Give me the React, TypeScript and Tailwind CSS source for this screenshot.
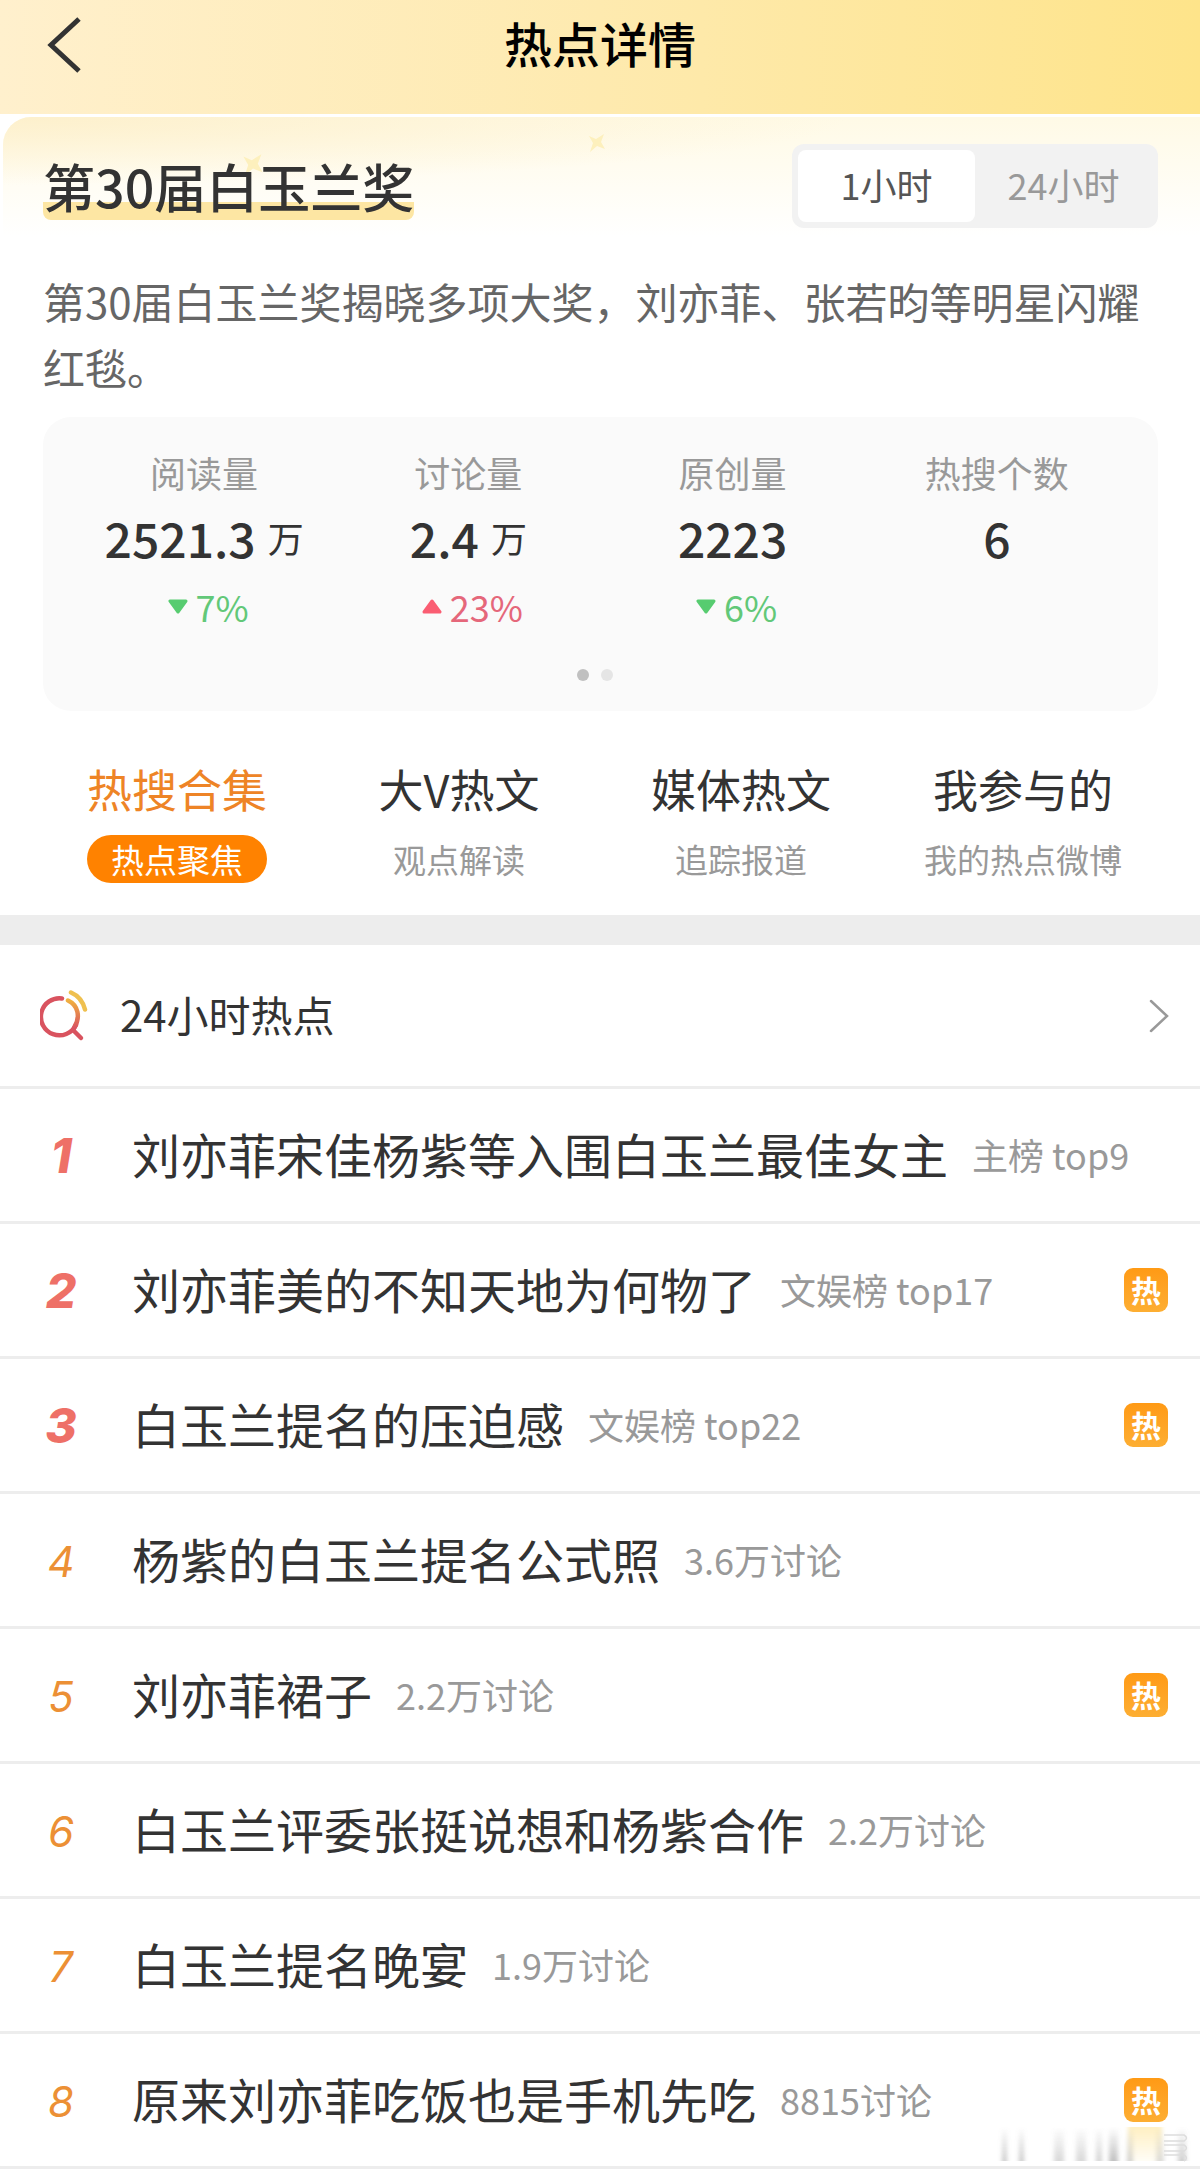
import { useState } from "react";

type Stat = { label: string; value: string; unit?: string; trend?: "up" | "down"; change?: string };
type Topic = { title: string; meta: string; hot?: boolean };

const stats: Stat[] = [
  { label: "阅读量", value: "2521.3", unit: "万", trend: "down", change: "7%" },
  { label: "讨论量", value: "2.4", unit: "万", trend: "up", change: "23%" },
  { label: "原创量", value: "2223", trend: "down", change: "6%" },
  { label: "热搜个数", value: "6" },
];

const tabs = [
  { name: "热搜合集", sub: "热点聚焦" },
  { name: "大V热文", sub: "观点解读" },
  { name: "媒体热文", sub: "追踪报道" },
  { name: "我参与的", sub: "我的热点微博" },
];

const topics: Topic[] = [
  { title: "刘亦菲宋佳杨紫等入围白玉兰最佳女主", meta: "主榜 top9" },
  { title: "刘亦菲美的不知天地为何物了", meta: "文娱榜 top17", hot: true },
  { title: "白玉兰提名的压迫感", meta: "文娱榜 top22", hot: true },
  { title: "杨紫的白玉兰提名公式照", meta: "3.6万讨论" },
  { title: "刘亦菲裙子", meta: "2.2万讨论", hot: true },
  { title: "白玉兰评委张挺说想和杨紫合作", meta: "2.2万讨论" },
  { title: "白玉兰提名晚宴", meta: "1.9万讨论" },
  { title: "原来刘亦菲吃饭也是手机先吃", meta: "8815讨论", hot: true },
];

// faint vertical streaks in the bottom right corner: x, width, opacity
const streaks = [
  [12, 5, 0.22],
  [29, 5, 0.22],
  [64, 10, 0.16],
  [86, 10, 0.16],
  [106, 6, 0.18],
  [119, 9, 0.26],
  [137, 6, 0.18],
  [166, 8, 0.14],
  [188, 8, 0.2],
];

function Star({ className }: { className: string }) {
  return (
    <svg viewBox="0 0 20 20" className={className} aria-hidden="true">
      <path d="M2 3l7 3 8-5-3 8 4 7-8-3-7 6 3-9z" fill="#fdf0bd" />
    </svg>
  );
}

function Trend({ stat }: { stat: Stat }) {
  if (!stat.trend) return null;
  const up = stat.trend === "up";
  return (
    <div className={`flex items-center gap-2 pl-2 text-4xl leading-[54px] ${up ? "text-[#e5677a]" : "text-[#62c878]"}`}>
      <svg viewBox="0 0 20 15" className={`h-[15px] w-5 ${up ? "" : "rotate-180"}`} aria-hidden="true">
        <path d="M10 2l8 11H2z" fill={up ? "#fa5d72" : "#57cc70"} stroke={up ? "#fa5d72" : "#57cc70"} strokeWidth="3" strokeLinejoin="round" />
      </svg>
      {stat.change}
    </div>
  );
}

function SearchIcon() {
  return (
    <svg viewBox="0 0 48 52" className="h-[52px] w-12" fill="none" strokeLinecap="round" strokeWidth="4.5" aria-hidden="true">
      <defs>
        <linearGradient id="ring" x1="0" y1="0" x2="0" y2="1">
          <stop offset="0" stopColor="#f0b040" />
          <stop offset="1" stopColor="#d9535f" />
        </linearGradient>
      </defs>
      <path d="M22 8.500A18.500 18.500 0 1 0 36 35" stroke="#d9535f" />
      <path d="M28 10.500C38 15 41 27 34 38" stroke="url(#ring)" />
      <path d="M33 40l8 8" stroke="#d9535f" />
      <path d="M31 2.500c7 3 12 9 14 17" stroke="#efc04f" />
    </svg>
  );
}

export default function App() {
  const [range, setRange] = useState("1小时");
  const [tab, setTab] = useState(0);

  return (
    <div className="relative bg-white font-['Noto_Sans_CJK_SC',sans-serif] text-[#333]">
      <header className="grid h-[114px] grid-cols-[1fr_auto_1fr] items-start bg-linear-to-r from-[#fff0cd] via-[#feeaaf] to-[#fee48a] px-[46px] pt-2">
        <button type="button" aria-label="返回" className="w-9 pt-2">
          <svg viewBox="0 0 36 58" className="h-[58px] w-9" fill="none" stroke="#333" strokeWidth="5">
            <path d="M33 3L5 29l28 26" />
          </svg>
        </button>
        <h1 className="text-5xl leading-[68px] font-medium text-black">热点详情</h1>
      </header>

      <main>
        <section className="relative mt-[3px] ml-[3px] rounded-tl-[28px] bg-linear-to-b from-[#fffae6] to-white to-[120px] pt-[27px] pr-[42px] pl-10">
          <div className="absolute inset-x-0 top-0 h-24 rounded-tl-[28px] bg-radial-[at_0%_0%] from-[#fdf0cc] to-transparent to-50%" />
          <Star className="absolute top-4 left-[584px] size-5" />
          <Star className="absolute top-9 left-[238px] size-6" />
          <div className="relative flex h-[84px] items-center justify-between">
            <h2 className="rounded-lg bg-linear-to-t from-[#fde6a3] from-[18px] to-transparent to-[18px] text-[52px] leading-[68px] font-medium">
              第30届白玉兰奖
            </h2>
            <div className="flex h-full rounded-xl bg-[#f2f2f2] p-[6px] text-4xl">
              {["1小时", "24小时"].map((r) => (
                <button
                  key={r}
                  type="button"
                  onClick={() => setRange(r)}
                  className={`w-[177px] rounded-lg pb-1 ${range === r ? "bg-white text-[#555]" : "text-[#999]"}`}
                >
                  {r}
                </button>
              ))}
            </div>
          </div>

          <p className="mt-10 text-[42px] leading-[66px] text-[#666]">
            第30届白玉兰奖揭晓多项大奖，刘亦菲、张若昀等明星闪耀红毯。
          </p>

          <div className="mt-[17px] rounded-[28px] bg-[#fafafa] px-[29px] pt-7 pb-[30px]">
            <div className="grid min-h-[192px] grid-cols-4">
              {stats.map((s) => (
                <div key={s.label} className="flex flex-col items-center">
                  <div className="text-4xl leading-[54px] text-[#999]">{s.label}</div>
                  <div className="mt-[2px] flex items-center gap-3 text-5xl leading-[72px] font-medium">
                    {s.value}
                    {s.unit && <span className="text-4xl font-normal">{s.unit}</span>}
                  </div>
                  <div className="mt-[6px]">
                    <Trend stat={s} />
                  </div>
                </div>
              ))}
            </div>
            <div className="mt-8 flex justify-center gap-3 pr-3">
              <span className="size-3 rounded-full bg-[#c0c0c0]" />
              <span className="size-3 rounded-full bg-[#e5e5e5]" />
            </div>
          </div>
        </section>

        <nav className="grid grid-cols-4 px-9 pt-[45px] pb-8">
          {tabs.map((t, i) => (
            <button key={t.name} type="button" onClick={() => setTab(i)} className="flex flex-col items-center gap-[13px]">
              <span className={`text-[45px] leading-[66px] ${tab === i ? "text-[#ee8426]" : ""}`}>{t.name}</span>
              <span className={`rounded-full px-6 text-[33px] leading-[48px] ${tab === i ? "bg-[#ff8200] text-white" : "text-[#999]"}`}>
                {t.sub}
              </span>
            </button>
          ))}
        </nav>

        <section className="border-t-[30px] border-[#ededed]">
          <a href="#hot" className="flex h-36 items-center border-b-[3px] border-[#ededed] pr-[31px] pl-10">
            <SearchIcon />
            <span className="ml-8 grow pb-1 text-[42px]">24小时热点</span>
            <svg viewBox="0 0 20 34" className="h-[34px] w-5" fill="none" stroke="#999" strokeWidth="2.5" strokeLinecap="round">
              <path d="M2 2l16 15L2 32" />
            </svg>
          </a>
          <ol id="hot">
            {topics.map((t, i) => (
              <li key={t.title} className="border-b-[3px] border-[#ededed]">
                <a href="#hot" className="flex h-[132px] items-center pr-8">
                  <span
                    className={`w-[122px] shrink-0 pt-[2px] text-center font-[Inter,sans-serif] italic ${
                      i < 3 ? "text-5xl font-extrabold text-[#ee7067]" : "text-[42px] text-[#ec9035]"
                    }`}
                  >
                    {i + 1}
                  </span>
                  <span className="ml-[10px] pb-1 text-5xl leading-[72px]">{t.title}</span>
                  <span className="ml-6 grow pb-[2px] text-4xl leading-[54px] text-[#999]">{t.meta}</span>
                  {t.hot && (
                    <span className="flex size-11 items-center justify-center rounded-[9px] bg-linear-to-b from-[#ff9a14] to-[#fdae32] pb-[2px] text-[30px] font-bold text-white">
                      热
                    </span>
                  )}
                </a>
              </li>
            ))}
          </ol>
        </section>
      </main>

      <svg viewBox="0 0 210 38" className="pointer-events-none absolute right-0 bottom-1 h-[38px] w-[210px]" aria-hidden="true">
        <defs>
          <linearGradient id="fade" x1="0" y1="0" x2="0" y2="1">
            <stop offset="0" stopColor="#888" stopOpacity="0" />
            <stop offset="1" stopColor="#888" />
          </linearGradient>
          <linearGradient id="glow" x1="0" y1="0" x2="0" y2="1">
            <stop offset="0" stopColor="#ffe9a8" stopOpacity="0.7" />
            <stop offset="1" stopColor="#ffe9a8" stopOpacity="0.1" />
          </linearGradient>
          <filter id="soft">
            <feGaussianBlur stdDeviation="2 0" />
          </filter>
        </defs>
        <g filter="url(#soft)">
          <rect x="138" y="0" width="34" height="34" fill="url(#glow)" />
          {streaks.map(([x, w, o]) => (
            <rect key={x} x={x} y="0" width={w} height="34" fill="url(#fade)" opacity={o * 2} />
          ))}
        </g>
        <g fill="none" stroke="#ddd" strokeWidth="1.5">
          <path d="M174 8h20q5 3 0 6h-20M174 18h20q5 3 0 6h-20M174 28h20q5 3 0 6" />
        </g>
      </svg>
    </div>
  );
}
